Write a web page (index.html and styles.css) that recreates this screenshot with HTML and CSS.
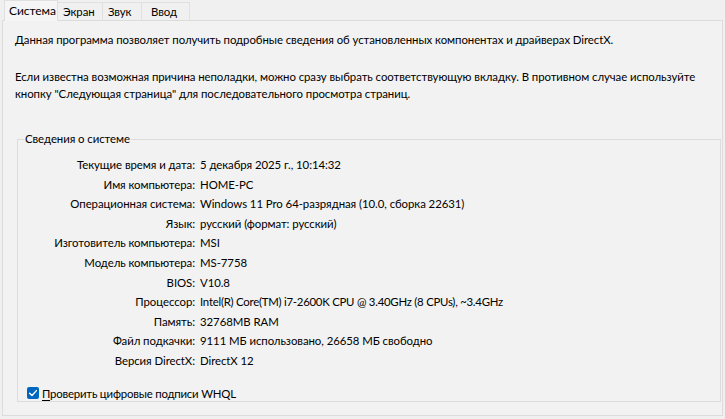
FILE: index.html
```html
<!DOCTYPE html>
<html lang="ru">
<head>
<meta charset="utf-8">
<title>Средство диагностики DirectX</title>
<link rel="stylesheet" href="styles.css">
</head>
<body>
<div class="window">
  <div class="tabs">
    <div class="tab active">Система</div>
    <div class="tab t2">Экран</div>
    <div class="tab t3">Звук</div>
    <div class="tab t4">Ввод</div>
  </div>
  <div class="panel">
    <p class="intro">Данная программа позволяет получить подробные сведения об установленных компонентах и драйверах DirectX.</p>
    <p class="hint">Если известна возможная причина неполадки, можно сразу выбрать соответствующую вкладку. В противном случае используйте кнопку "Следующая страница" для последовательного просмотра страниц.</p>
    <fieldset class="group">
      <legend>Сведения о системе</legend>
      <div class="info">
        <div class="lbl">Текущие время и дата:</div><div class="val">5 декабря 2025 г., 10:14:32</div>
        <div class="lbl">Имя компьютера:</div><div class="val">HOME-PC</div>
        <div class="lbl">Операционная система:</div><div class="val">Windows 11 Pro 64-разрядная (10.0, сборка 22631)</div>
        <div class="lbl">Язык:</div><div class="val">русский (формат: русский)</div>
        <div class="lbl">Изготовитель компьютера:</div><div class="val">MSI</div>
        <div class="lbl">Модель компьютера:</div><div class="val">MS-7758</div>
        <div class="lbl">BIOS:</div><div class="val">V10.8</div>
        <div class="lbl">Процессор:</div><div class="val num">Intel(R) Core(TM) i7-2600K CPU @ 3.40GHz (8 CPUs), ~3.4GHz</div>
        <div class="lbl">Память:</div><div class="val">32768MB RAM</div>
        <div class="lbl">Файл подкачки:</div><div class="val">9111 МБ использовано, 26658 МБ свободно</div>
        <div class="lbl">Версия DirectX:</div><div class="val">DirectX 12</div>
      </div>
      <label class="check">
        <span class="box"><svg viewBox="0 0 12 12" width="12" height="12"><path d="M2.6 6.2 L5 8.5 L9.4 3.6" fill="none" stroke="#fff" stroke-width="1.4" stroke-linecap="round" stroke-linejoin="round"/></svg></span>
        <span class="ctext"><u>П</u>роверить цифровые подписи WHQL</span>
      </label>
    </fieldset>
  </div>
</div>
</body>
</html>
```
FILE: styles.css
```css
* { box-sizing: border-box; }
html, body {
  margin: 0;
  padding: 0;
  background: #f0f0f0;
}
body {
  width: 725px;
  height: 419px;
  overflow: hidden;
  font-family: Lato, "Noto Sans", sans-serif;
  font-size: 11.4px;
  letter-spacing: -0.06px;
  color: #000;
}
.window {
  padding: 0 2px 0 2px;
}
.tabs {
  display: flex;
  height: 20px;
  padding-left: 2px;
  align-items: flex-end;
  position: relative;
  z-index: 1;
}
.tab {
  height: 18px;
  line-height: 17px;
  border: 1px solid #e0e0e0;
  border-bottom: none;
  margin-right: -1px;
  background: #f0f0f0;
  white-space: nowrap;
}
.tab.active {
  width: 54px;
  height: 21px;
  line-height: 19px;
  padding-left: 4px;
  margin-bottom: -1px;
  background: #f5f5f5;
  font-size: 12px;
}
.tab.t2 { width: 46px; padding-left: 5px; }
.tab.t3 { width: 40px; padding-left: 5px; }
.tab.t4 { width: 49px; padding-left: 9px; }
.panel {
  border: 1px solid #dcdcdc;
  height: 396px;
  background: #f2f2f2;
  padding: 10px 0 0 12px;
}
.panel p {
  margin: 0;
  line-height: 17px;
}
.intro { margin-bottom: 20px !important; }
.hint { width: 706px; }
.group {
  margin: 30px 0 0 2px;
  width: 704px;
  height: 270px;
  border: 1px solid #dcdcdc;
  padding: 0;
  position: relative;
}
.group legend {
  padding: 0 1px;
  margin-left: 6px;
  line-height: 14px;
}
.info {
  display: grid;
  grid-template-columns: 177px auto;
  column-gap: 5px;
  margin-top: 9px;
}
.lbl {
  text-align: right;
  line-height: 19.6px;
  white-space: nowrap;
}
.val {
  line-height: 19.6px;
  white-space: nowrap;
}
.val.num { letter-spacing: -0.25px; }
.check {
  display: flex;
  align-items: center;
  gap: 3px;
  margin: 16px 0 0 9px;
}
.ctext { letter-spacing: -0.2px; }
.box {
  width: 12px;
  height: 12px;
  border-radius: 2px;
  background: #0067c0;
  display: flex;
}
.ctext u { text-decoration-thickness: 1px; text-underline-offset: 2px; }
```
